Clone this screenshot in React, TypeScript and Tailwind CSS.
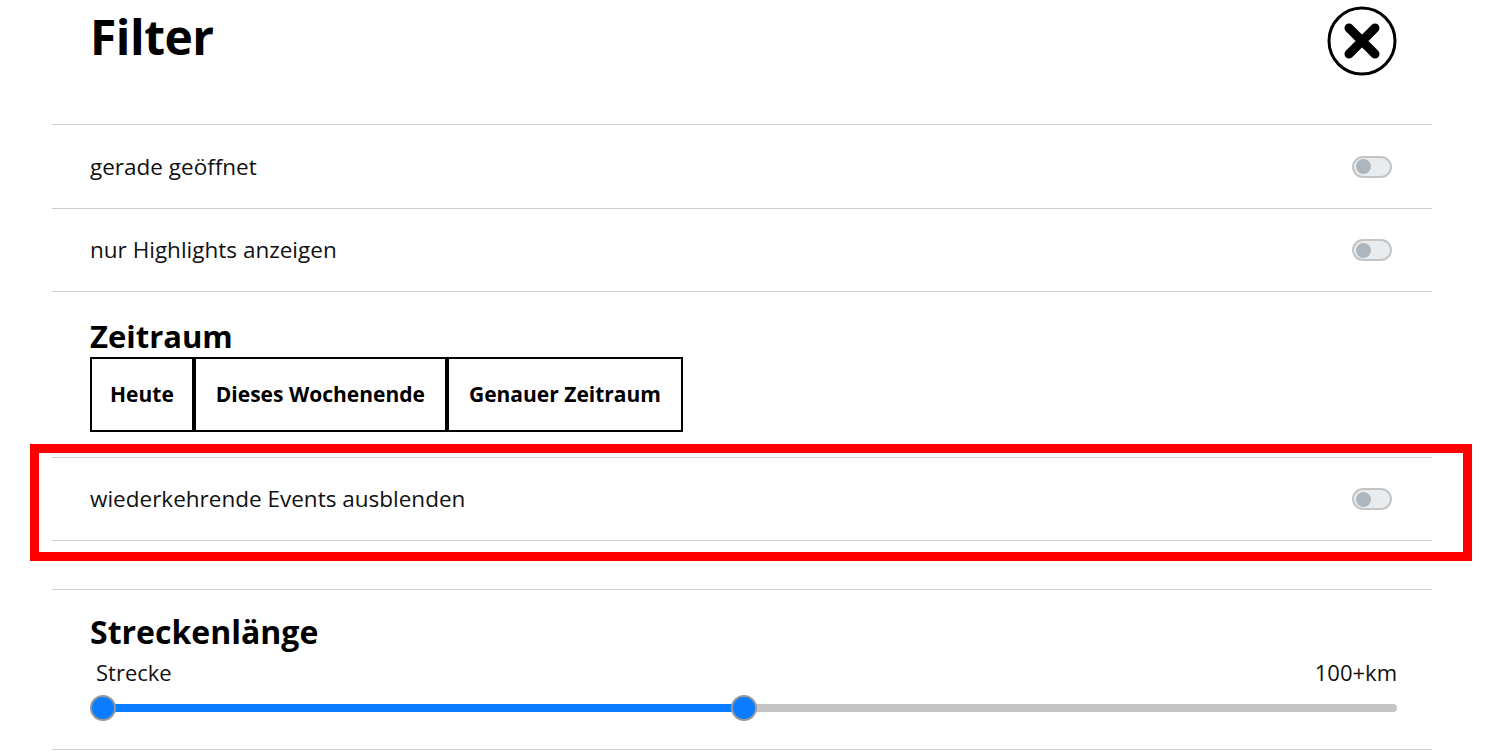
import React from "react";

function Toggle() {
  return (
    <span className="flex h-[22px] w-[40px] items-center rounded-full border-2 border-[#c4c4c4] bg-[#e9ecef] px-[2px]">
      <span className="h-[15px] w-[15px] rounded-full bg-[#adb5bd]" />
    </span>
  );
}

function ToggleRow({ label, className = "" }: { label: string; className?: string }) {
  return (
    <div className={`flex h-[84px] items-center justify-between pl-[38px] pr-[40px] ${className}`}>
      <span className="text-[22.5px] text-[#111]">{label}</span>
      <Toggle />
    </div>
  );
}

export default function App() {
  const value = 50;
  return (
    <div className="min-h-screen bg-white pl-[52px] pr-[67px] font-['Open_Sans',sans-serif] text-black">
      <header className="flex h-[124px] items-start justify-between pl-[38px] pr-[35px]">
        <h1 className="text-[48px] font-bold leading-[74px] tracking-[-0.5px]">Filter</h1>
        <button className="mt-[6px]" aria-label="Schließen">
          <svg width="70" height="70" viewBox="0 0 70 70">
            <circle cx="35" cy="35" r="33" fill="none" stroke="black" strokeWidth="3" />
            <path d="M22 22 L48 48 M48 22 L22 48" stroke="black" strokeWidth="9" strokeLinecap="round" />
          </svg>
        </button>
      </header>

      <ToggleRow label="gerade geöffnet" className="border-t border-[#cfcfcf]" />
      <ToggleRow label="nur Highlights anzeigen" className="border-y border-[#cfcfcf] h-[84px]" />

      <section className="pl-[38px] pt-[24px]">
        <h2 className="text-[31px] font-bold leading-[40px]">Zeitraum</h2>
        <div className="mt-[1px] flex">
          <button className="h-[75px] border-2 border-black px-[18px] text-[21px] font-bold">Heute</button>
          <button className="h-[75px] border-2 border-black px-[20px] text-[21px] font-bold">Dieses Wochenende</button>
          <button className="h-[75px] border-2 border-black px-[20px] text-[21px] font-bold">Genauer Zeitraum</button>
        </div>
      </section>

      <div className="relative mt-[25px]">
        <ToggleRow label="wiederkehrende Events ausblenden" className="h-[83px] border-y border-[#cfcfcf]" />
        <div className="pointer-events-none absolute -top-[13px] -bottom-[20px] -left-[22px] -right-[40px] border-[9px] border-[#ff0000]" />
      </div>

      <section className="mt-[48px] border-y border-[#cfcfcf] pb-[28px] pt-[22px]">
        <h2 className="pl-[38px] text-[32px] font-bold leading-[40px]">Streckenlänge</h2>
        <div className="mt-[5px] flex justify-between pl-[44px] pr-[35px] text-[22px] leading-[30px] text-[#111]">
          <span>Strecke</span>
          <span>100+km</span>
        </div>
        <div className="relative mt-[8px] ml-[38px] mr-[35px] h-[26px]">
          <div className="absolute left-[6px] right-0 top-[9px] h-[8px] rounded-full bg-[#c4c4c4]" />
          <div
            className="absolute left-[13px] top-[9px] h-[8px] bg-[#0a7cff]"
            style={{ width: `calc((100% - 26px) * ${value / 100})` }}
          />
          <span className="absolute left-0 top-0 h-[26px] w-[26px] rounded-full border-2 border-[#999] bg-[#0a7cff]" />
          <span
            className="absolute top-0 h-[26px] w-[26px] rounded-full border-2 border-[#999] bg-[#0a7cff]"
            style={{ left: `calc((100% - 26px) * ${value / 100})` }}
          />
        </div>
      </section>
    </div>
  );
}
